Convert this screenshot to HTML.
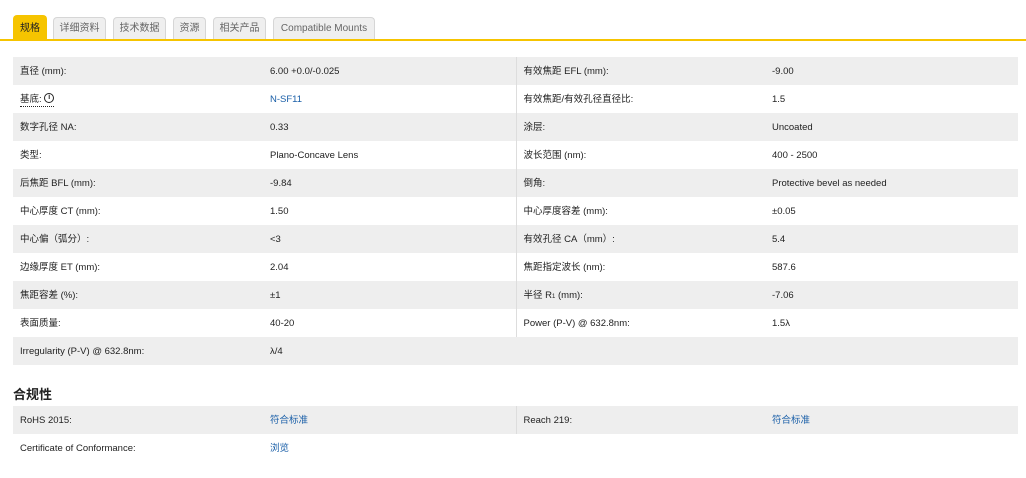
<!DOCTYPE html>
<html><head><meta charset="utf-8"><style>
body{margin:0;background:#fff;font-family:"Liberation Sans","Noto Sans CJK SC",sans-serif;font-size:9.5px;color:#222;width:1026px;height:478px;overflow:hidden;position:relative}
.tab{position:absolute;top:17px;height:23px;box-sizing:border-box;border:1px solid #d6d6d6;border-bottom:none;border-radius:4px 4px 0 0;background:#efefef;color:#666;font-size:10px;line-height:22px;text-align:center}
.tab.a{background:#f6c400;border-color:#f6c400;color:#222;top:15px;height:25px;line-height:26px}
.line{position:absolute;left:0;top:39px;width:1026px;height:2px;background:#f6c400}
table{position:absolute;left:13px;width:1005px;border-collapse:collapse;table-layout:fixed}
td{height:28px;padding:2px 0 0 7px;box-sizing:border-box;vertical-align:middle;line-height:12px;white-space:nowrap}
tr.g td{background:#eeeeee}
td.l{width:250px}td.v{width:253px}td.r{border-left:1px solid #ddd;width:249px}
a{color:#1a5fa8;text-decoration:none}
h3{position:absolute;left:13px;top:384px;margin:0;font-size:13px;font-weight:bold}
.i{display:inline-block;width:8px;height:8px;border:1.5px solid #222;border-radius:50%;font-size:7px;line-height:8px;text-align:center;font-weight:bold;vertical-align:middle;margin-top:-2px}
</style></head><body>
<div class="tab a" style="left:13px;width:34px">规格</div>
<div class="tab" style="left:53px;width:53px">详细资料</div>
<div class="tab" style="left:113px;width:53px">技术数据</div>
<div class="tab" style="left:173px;width:33px">资源</div>
<div class="tab" style="left:213px;width:53px">相关产品</div>
<div class="tab" style="left:273px;width:102px">Compatible Mounts</div>
<div class="line"></div>
<table style="top:57px">
<tr class="g"><td class="l">直径 (mm):</td><td class="v">6.00 +0.0/-0.025</td><td class="r">有效焦距 EFL (mm):</td><td>-9.00</td></tr>
<tr><td class="l"><span style="border-bottom:1px dotted #222;display:inline-block;line-height:12px">基底: <span class="i">i</span></span></td><td class="v"><a>N-SF11</a></td><td class="r">有效焦距/有效孔径直径比:</td><td>1.5</td></tr>
<tr class="g"><td class="l">数字孔径 NA:</td><td class="v">0.33</td><td class="r">涂层:</td><td>Uncoated</td></tr>
<tr><td class="l">类型:</td><td class="v">Plano-Concave Lens</td><td class="r">波长范围 (nm):</td><td>400 - 2500</td></tr>
<tr class="g"><td class="l">后焦距 BFL (mm):</td><td class="v">-9.84</td><td class="r">倒角:</td><td>Protective bevel as needed</td></tr>
<tr><td class="l">中心厚度 CT (mm):</td><td class="v">1.50</td><td class="r">中心厚度容差 (mm):</td><td>±0.05</td></tr>
<tr class="g"><td class="l">中心偏（弧分）:</td><td class="v">&lt;3</td><td class="r">有效孔径 CA（mm）:</td><td>5.4</td></tr>
<tr><td class="l">边缘厚度 ET (mm):</td><td class="v">2.04</td><td class="r">焦距指定波长 (nm):</td><td>587.6</td></tr>
<tr class="g"><td class="l">焦距容差 (%):</td><td class="v">±1</td><td class="r">半径 R<span style="font-size:6px">1</span> (mm):</td><td>-7.06</td></tr>
<tr><td class="l">表面质量:</td><td class="v">40-20</td><td class="r">Power (P-V) @ 632.8nm:</td><td>1.5λ</td></tr>
<tr class="g"><td class="l">Irregularity (P-V) @ 632.8nm:</td><td class="v">λ/4</td><td class="r" style="border-left:none"></td><td></td></tr>
</table>
<h3>合规性</h3>
<table style="top:406px">
<tr class="g"><td class="l">RoHS 2015:</td><td class="v"><a>符合标准</a></td><td class="r">Reach 219:</td><td><a>符合标准</a></td></tr>
<tr><td class="l">Certificate of Conformance:</td><td class="v"><a>浏览</a></td><td class="r" style="border-left:none"></td><td></td></tr>
</table>
</body></html>
